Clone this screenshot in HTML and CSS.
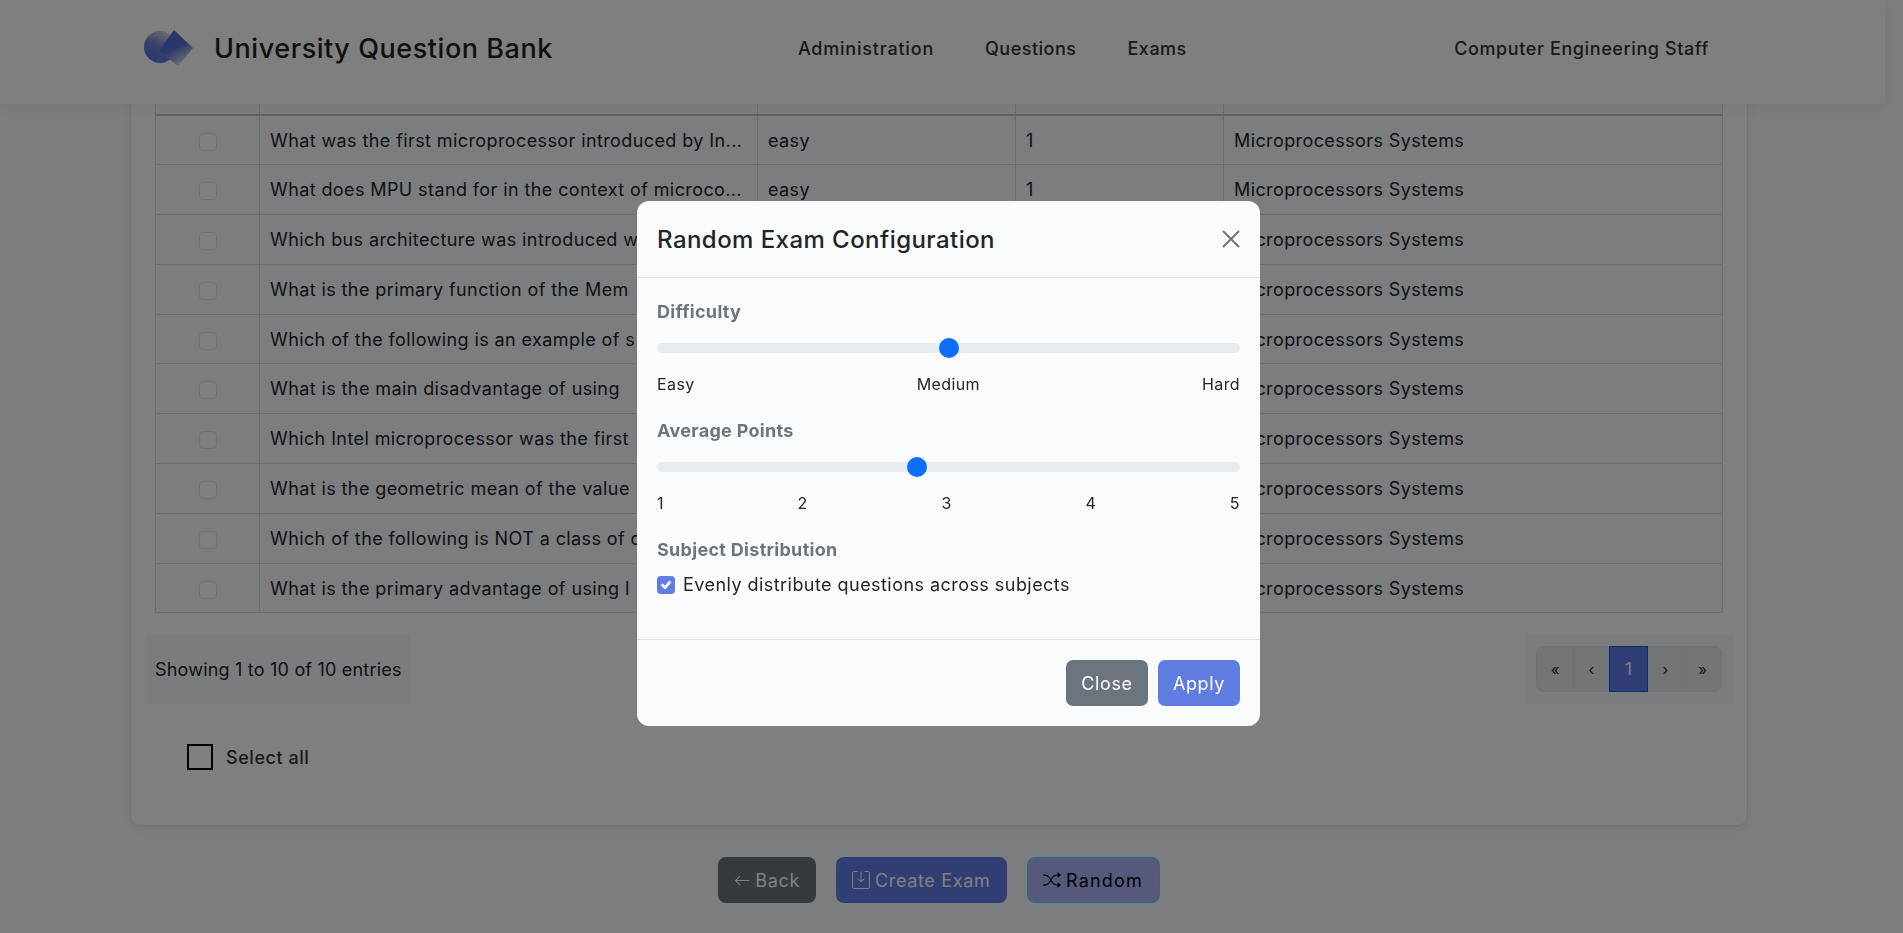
FILE: index.html
```html
<!DOCTYPE html>
<html lang="en">
<head>
<meta charset="utf-8">
<title>University Question Bank</title>
<link rel="stylesheet" href="styles.css">
</head>
<body>
<header class="nav">
  <div class="brand">
    <svg class="logo" viewBox="0 0 52 38" width="52" height="38" aria-hidden="true">
      <defs>
        <linearGradient id="lgA" x1="0.2" y1="0.95" x2="0.75" y2="0.05"><stop offset="0" stop-color="#5471e2"/><stop offset="0.45" stop-color="#6a80d4"/><stop offset="1" stop-color="#d6d6da"/></linearGradient>
        <linearGradient id="lgB" x1="0.35" y1="0.1" x2="0.75" y2="0.95"><stop offset="0" stop-color="#4a68e0"/><stop offset="0.45" stop-color="#5a72d6"/><stop offset="1" stop-color="#e2e2e2"/></linearGradient>
      </defs>
      <circle cx="17" cy="18" r="16" fill="url(#lgA)"/>
      <polygon points="31,1 50,19 35,37 16,22" fill="url(#lgB)"/>
    </svg>
    <span class="brand-name">University Question Bank</span>
  </div>
  <nav class="links">
    <a class="link link-wide">Administration</a>
    <a class="link">Questions</a>
    <a class="link">Exams</a>
  </nav>
  <div class="user">Computer Engineering Staff</div>
</header>

<main class="page">
  <section class="card">
    <table class="qtable">
      <colgroup><col class="c1"><col class="c2"><col class="c3"><col class="c4"><col class="c5"></colgroup>
      <thead><tr><th></th><th>Question</th><th>Difficulty</th><th>Points</th><th>Subject</th></tr></thead>
      <tbody>
        <tr><td class="chk"><span class="box"></span></td><td>What was the first microprocessor introduced by In...</td><td>easy</td><td>1</td><td>Microprocessors Systems</td></tr>
        <tr><td class="chk"><span class="box"></span></td><td>What does MPU stand for in the context of microco...</td><td>easy</td><td>1</td><td>Microprocessors Systems</td></tr>
        <tr><td class="chk"><span class="box"></span></td><td>Which bus architecture was introduced w</td><td>easy</td><td>1</td><td>Microprocessors Systems</td></tr>
        <tr><td class="chk"><span class="box"></span></td><td>What is the primary function of the Mem</td><td>easy</td><td>1</td><td>Microprocessors Systems</td></tr>
        <tr><td class="chk"><span class="box"></span></td><td>Which of the following is an example of s</td><td>easy</td><td>1</td><td>Microprocessors Systems</td></tr>
        <tr><td class="chk"><span class="box"></span></td><td>What is the main disadvantage of using</td><td>easy</td><td>1</td><td>Microprocessors Systems</td></tr>
        <tr><td class="chk"><span class="box"></span></td><td>Which Intel microprocessor was the first</td><td>easy</td><td>1</td><td>Microprocessors Systems</td></tr>
        <tr><td class="chk"><span class="box"></span></td><td>What is the geometric mean of the value</td><td>easy</td><td>1</td><td>Microprocessors Systems</td></tr>
        <tr><td class="chk"><span class="box"></span></td><td>Which of the following is NOT a class of c</td><td>easy</td><td>1</td><td>Microprocessors Systems</td></tr>
        <tr><td class="chk"><span class="box"></span></td><td>What is the primary advantage of using l</td><td>easy</td><td>1</td><td>Microprocessors Systems</td></tr>
      </tbody>
    </table>
    <div class="tfoot">
      <div class="info">Showing 1 to 10 of 10 entries</div>
      <div class="pager-wrap">
        <ul class="pager">
          <li class="pg">«</li><li class="pg">‹</li><li class="pg active">1</li><li class="pg">›</li><li class="pg">»</li>
        </ul>
      </div>
    </div>
    <label class="select-all"><span class="sa-box"></span><span>Select all</span></label>
  </section>
  <div class="actions">
    <button class="btn btn-back">
      <svg viewBox="0 0 16 16" width="17" height="17" fill="currentColor" aria-hidden="true"><path fill-rule="evenodd" d="M15 8a.5.5 0 0 0-.5-.5H2.707l3.147-3.146a.5.5 0 1 0-.708-.708l-4 4a.5.5 0 0 0 0 .708l4 4a.5.5 0 0 0 .708-.708L2.707 8.5H14.5A.5.5 0 0 0 15 8z"/></svg>
      <span>Back</span></button>
    <button class="btn btn-create">
      <svg viewBox="0 0 18 18" width="18" height="18" fill="none" stroke="currentColor" aria-hidden="true"><path d="M5.5 .5H2A1.5 1.5 0 0 0 .5 2v14A1.5 1.5 0 0 0 2 17.5h14a1.5 1.5 0 0 0 1.5-1.5V2A1.5 1.5 0 0 0 16 .5h-3.5"/><path d="M9 .5v10M5.5 7.5 9 11l3.500-3.500"/></svg>
      <span>Create Exam</span></button>
    <button class="btn btn-random">
      <svg viewBox="0 0 16 16" width="18" height="18" fill="currentColor" aria-hidden="true"><path fill-rule="evenodd" d="M0 3.500A.5.5 0 0 1 .5 3H1c2.202 0 3.827 1.240 4.874 2.418.49.552.865 1.102 1.126 1.532.26-.43.636-.98 1.126-1.532C9.173 4.240 10.798 3 13 3v1c-1.798 0-3.173 1.010-4.126 2.082A9.624 9.624 0 0 0 7.556 8a9.624 9.624 0 0 0 1.317 1.918C9.828 10.990 11.204 12 13 12v1c-2.202 0-3.827-1.240-4.874-2.418A10.595 10.595 0 0 1 7 9.050c-.26.43-.636.98-1.126 1.532C4.827 11.760 3.202 13 1 13H.5a.5.5 0 0 1 0-1H1c1.798 0 3.173-1.010 4.126-2.082A9.624 9.624 0 0 0 6.444 8a9.624 9.624 0 0 0-1.317-1.918C4.172 5.010 2.796 4 1 4H.5a.5.5 0 0 1-.5-.5z"/><path d="M13 5.466V1.534a.25.25 0 0 1 .41-.192l2.360 1.966c.12.1.12.284 0 .384l-2.360 1.966a.25.25 0 0 1-.41-.192zm0 9v-3.932a.25.25 0 0 1 .41-.192l2.360 1.966c.12.1.12.284 0 .384l-2.360 1.966a.25.25 0 0 1-.41-.192z"/></svg>
      <span>Random</span></button>
  </div>
</main>

<div class="backdrop"></div>

<div class="modal" role="dialog">
  <div class="m-head">
    <h5 class="m-title">Random Exam Configuration</h5>
    <svg class="m-x" viewBox="0 0 18 18" width="18" height="18" stroke="#6f7276" stroke-width="2" aria-label="Close"><path d="M1 1 17 17M17 1 1 17"/></svg>
  </div>
  <div class="m-body">
    <div class="m-label">Difficulty</div>
    <input class="range" type="range" min="0" max="2" step="1" value="1">
    <div class="ticks"><span>Easy</span><span>Medium</span><span>Hard</span></div>
    <div class="m-label">Average Points</div>
    <input class="range" type="range" min="1" max="5" step="any" value="2.777">
    <div class="ticks"><span>1</span><span>2</span><span>3</span><span>4</span><span>5</span></div>
    <div class="m-label">Subject Distribution</div>
    <label class="dist">
      <span class="dist-box"><svg viewBox="0 0 20 20" width="18" height="18" fill="none" stroke="#fff" stroke-width="3" stroke-linecap="round" stroke-linejoin="round"><path d="M6 10l3 3 5-6"/></svg></span>
      <span>Evenly distribute questions across subjects</span>
    </label>
  </div>
  <div class="m-foot">
    <button class="m-btn m-close">Close</button>
    <button class="m-btn m-apply">Apply</button>
  </div>
</div>
</body>
</html>
```
FILE: styles.css
```css
* { box-sizing: border-box; }
html, body { margin: 0; height: 100%; overflow: hidden; }
body {
  background: #f9fbfe;
  color: #212529;
  font-family: Inter, "Open Sans", "Liberation Sans", sans-serif;
  font-size: 16px;
}
.nav {
  position: absolute; top: 0; left: 0; z-index: 2;
  width: 1885px; height: 104px;
  display: flex; align-items: center;
  padding: 0 176px 8px 143px;
  background: #fff;
  box-shadow: 0 4px 16px rgba(0,0,0,.06);
}
.brand { display: flex; align-items: center; gap: 19px; }
.logo { display: block; }
.brand-name { font-size: 27px; font-weight: 500; color: #222; letter-spacing: 0.55px; }
.links { display: flex; margin-left: 245px; gap: 51px; }
.link { font-size: 18px; font-weight: 500; color: #333; letter-spacing: 0.5px; }
.link-wide { letter-spacing: 0.8px; }
.user { margin-left: auto; font-size: 18px; font-weight: 500; color: #333; letter-spacing: 0.6px; }

.page { padding: 40px 155px 0 130px; }
.card {
  height: 786px;
  padding: 20px 25px 0 24px;
  background: #fff;
  border: 1px solid #e6e6e6;
  border-radius: 10px;
  box-shadow: 0 4px 12px rgba(0,0,0,.05);
}
.qtable {
  width: 1568px;
  table-layout: fixed;
  border-collapse: collapse;
  background: #f9fbfe;
}
.c1 { width: 104px; } .c2 { width: 498px; } .c3 { width: 258px; } .c4 { width: 208px; }
.qtable th {
  height: 53.5px; padding: 0 10px; text-align: left; font-weight: 600;
  border: 1px solid #d8dcdc; border-bottom: 2px solid #c4c8c6;
}
.qtable td {
  height: 49.8px; padding: 0 10px;
  border: 1px solid #d8dcdc;
  font-size: 18px; letter-spacing: 0.4px; white-space: nowrap; overflow: hidden; color: #212529;
}
.qtable td.chk { text-align: center; padding: 0; }
.box { display: inline-block; width: 18px; height: 18px; vertical-align: middle; border: 1px solid #dee2e6; border-radius: 4px; background: #fff; }

.tfoot { display: flex; justify-content: space-between; margin: 21px -11px 0 -9px; }
.info {
  height: 70px; width: 265px; display: flex; align-items: center;
  padding-left: 9px; background: #f7f8fb; font-size: 18px; letter-spacing: 0.2px;
}
.pager-wrap { height: 70px; width: 207px; padding: 12px 10px; background: #f7f8fb; }
.pager { list-style: none; margin: 0; padding: 0; display: flex; height: 46px; }
.pg {
  width: 37px; display: flex; align-items: center; justify-content: center;
  background: #e9ebed; border: 1px solid #dee2e6; margin-left: -1px; color: #212529; font-size: 15px;
}
.pg:first-child { margin-left: 0; border-radius: 8px 0 0 8px; width: 38px; }
.pg:last-child { border-radius: 0 8px 8px 0; width: 39px; }
.pg.active { background: #607cea; border-color: #0d5fd8; color: #fff; width: 39px; z-index: 1; font-size: 17px; }

.select-all { display: flex; align-items: center; gap: 13px; margin: 40px 0 0 32px; font-weight: 500; font-size: 18px; letter-spacing: 0.55px; color: #333; }
.sa-box { width: 26px; height: 26px; border: 2px solid #000; background: #fff; }

.actions { display: flex; justify-content: center; gap: 20px; margin-top: 31px; }
.btn {
  height: 46px; padding: 0 15px; border: 1px solid transparent; border-radius: 8px;
  display: flex; align-items: center; gap: 5px; white-space: nowrap;
  font: inherit; font-size: 18px; letter-spacing: 0.65px; color: #fff;
}
.btn-back { width: 98px; background: #6c757d; }
.btn-create { width: 171px; background: #607ce8; }
.btn-random { width: 133px; background: #aab3f8; border-color: #5cd4f0; color: #000; letter-spacing: 1.2px; }

.backdrop { position: fixed; inset: 0; z-index: 3; background: rgba(0,0,0,.5); }

.modal {
  position: fixed; z-index: 4; left: 637px; top: 201px;
  width: 623px; height: 525px;
  display: flex; flex-direction: column;
  background: #fafbfd; border-radius: 12px;
}
.m-head {
  height: 77px; padding: 0 20px; display: flex; align-items: center; justify-content: space-between;
  border-bottom: 1px solid #dee2e6;
}
.m-title { margin: 0; font-size: 24px; font-weight: 500; color: #212529; letter-spacing: 0.45px; }
.m-body { flex: 1; padding: 22px 20px 0; }
.m-label { font-size: 18px; font-weight: 700; color: #6c757d; line-height: 24px; letter-spacing: 0.3px; }
.range {
  display: block; width: 100%; height: 20px; margin: 14px 0 0; padding: 0;
  appearance: none; -webkit-appearance: none; background: transparent;
}
.range::-webkit-slider-runnable-track { height: 10px; background: #e9ecef; border-radius: 5px; }
.range::-webkit-slider-thumb {
  -webkit-appearance: none; appearance: none;
  width: 20px; height: 20px; margin-top: -5px; border-radius: 50%; background: #0d6efd; border: 0;
}
.ticks { display: flex; justify-content: space-between; margin: 15px 0 24px; font-size: 16px; letter-spacing: 0.4px; line-height: 22px; color: #212529; }
.dist { display: flex; align-items: center; gap: 8px; margin-top: 12px; font-size: 18px; letter-spacing: 0.45px; line-height: 22px; }
.dist-box { width: 18px; height: 18px; border-radius: 4px; background: #5f7de4; display: block; }
.dist-box svg { display: block; }
.m-foot {
  height: 87px; padding: 20px; display: flex; justify-content: flex-end; gap: 10px;
  border-top: 1px solid #dee2e6;
}
.m-btn { width: 82px; height: 46px; border: 0; border-radius: 7px; color: #fff; font: inherit; font-size: 18px; letter-spacing: 0.6px; }
.m-close { background: #6c757d; }
.m-apply { background: #5f7de0; }
```
